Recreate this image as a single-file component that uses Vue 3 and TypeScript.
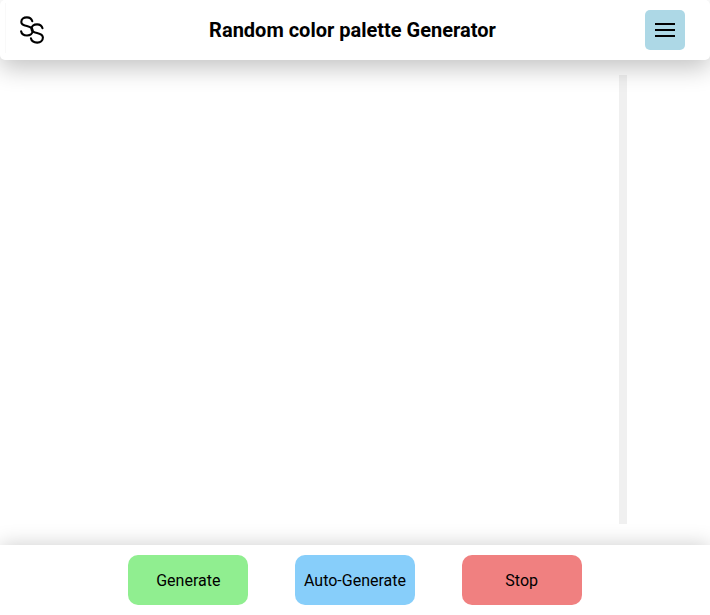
<script setup lang="ts">
interface Action {
  label: string
  tone: string
}

const actions: Action[] = [
  { label: 'Generate', tone: 'green' },
  { label: 'Auto-Generate', tone: 'blue' },
  { label: 'Stop', tone: 'red' },
]
</script>

<template>
  <div class="page">
    <header class="header">
      <div class="brand">
        <svg class="logo" viewBox="0 0 32 36" aria-hidden="true">
          <path d="M16.3 9.3C15.6 6.7 13.6 5.4 10.9 5.4C7.6 5.4 5.3 7.2 5.3 9.9C5.3 15.9 16.7 12.2 16.7 18.6C16.7 21.6 14.3 23.5 11 23.5C7.8 23.5 5.6 22 5.1 19.3" />
          <path d="M26.5 16.3C25.8 13.7 23.8 12.4 21.1 12.4C17.8 12.4 15.5 14.2 15.5 16.9C15.5 22.9 26.9 19.2 26.9 25.6C26.9 28.6 24.5 30.6 21.2 30.6C18 30.6 15.5 29 14.9 26.3" />
        </svg>
      </div>
      <h1 class="title">Random color palette Generator</h1>
      <button class="menu" type="button" aria-label="Menu">
        <span class="bar"></span>
        <span class="bar"></span>
        <span class="bar"></span>
      </button>
    </header>
    <main class="palette">
      <div class="track"></div>
    </main>
    <footer class="footer">
      <div class="actions">
        <button v-for="a in actions" :key="a.label" type="button" class="action" :class="a.tone">
          {{ a.label }}
        </button>
      </div>
    </footer>
  </div>
</template>

<style>
body {
  margin: 0;
  overflow: hidden;
}
</style>

<style scoped>
.page {
  height: 100vh;
  display: flex;
  flex-direction: column;
  background: #fff;
  color: #000;
  font-family: Roboto, sans-serif;
}
.header {
  height: 60px;
  flex: none;
  box-sizing: border-box;
  padding: 0 25px 0 5px;
  display: flex;
  align-items: center;
  justify-content: space-between;
  background: #fff;
  border-radius: 5px;
  box-shadow: 0 8px 24px rgba(0, 0, 0, 0.24);
}
.brand {
  box-sizing: border-box;
  width: 55px;
  height: 50px;
  margin-bottom: 4px;
  padding: 9px 0 0 10px;
  border-left: 1px solid #f9f9f9;
}
.logo {
  display: block;
  width: 32px;
  height: 36px;
  fill: none;
  stroke: #000;
  stroke-width: 2.1;
  stroke-linecap: round;
}
.title {
  margin: 0;
  font-size: 20px;
  line-height: 24px;
  font-weight: 700;
}
.menu {
  width: 40px;
  height: 40px;
  padding: 0;
  border: 0;
  border-radius: 5px;
  background: lightblue;
  display: flex;
  flex-direction: column;
  align-items: center;
  justify-content: center;
  gap: 4px;
}
.bar {
  width: 20px;
  height: 2px;
  background: #000;
}
.palette {
  flex: 1;
  min-height: 0;
  display: flex;
  justify-content: flex-end;
  padding: 15px 83px 21px;
}
.track {
  width: 8px;
  background: rgba(0, 0, 0, 0.06);
}
.footer {
  height: 70px;
  flex: none;
  display: flex;
  align-items: center;
  justify-content: center;
  background: #fff;
  box-shadow: 0 0 20px rgba(0, 0, 0, 0.2);
}
.actions {
  width: 500px;
  display: flex;
  justify-content: space-around;
}
.action {
  width: 120px;
  height: 50px;
  padding: 0;
  border: 0;
  border-radius: 10px;
  color: #000;
  font-family: inherit;
  font-size: 16px;
}
.green {
  background: lightgreen;
}
.blue {
  background: lightskyblue;
}
.red {
  background: lightcoral;
}
</style>
